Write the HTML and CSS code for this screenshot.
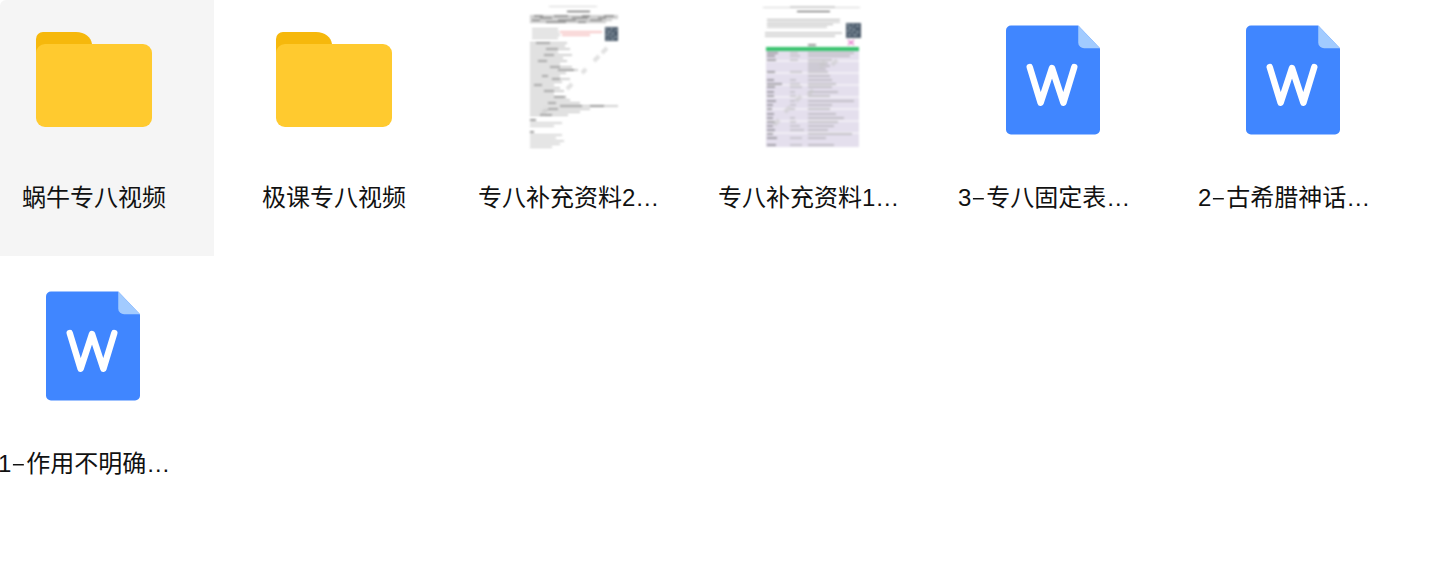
FILE: index.html
```html
<!DOCTYPE html>
<html lang="zh-CN">
<head>
  <meta charset="UTF-8" />
  <title>专八资料</title>
  <link rel="stylesheet" href="styles.css">
</head>
<body>

<div class="page">
  <div class="file-list">

    <div class="file-item active">
      <div class="file-icon">
        <svg class="folder" viewBox="0 0 116 95">
          <path class="folder-tab" d="M0 30V7a7 7 0 0 1 7-7h33c9 0 15 5 16 12v18z"/>
          <rect class="folder-front" y="12" width="116" height="83" rx="9"/>
        </svg>
      </div>
      <div class="file-name">蜗牛专八视频</div>
    </div>

    <div class="file-item">
      <div class="file-icon">
        <svg class="folder" viewBox="0 0 116 95">
          <path class="folder-tab" d="M0 30V7a7 7 0 0 1 7-7h33c9 0 15 5 16 12v18z"/>
          <rect class="folder-front" y="12" width="116" height="83" rx="9"/>
        </svg>
      </div>
      <div class="file-name">极课专八视频</div>
    </div>

    <div class="file-item">
      <div class="file-icon">
        <svg class="thumb" viewBox="0 0 108 150">
          <path class="ln-light" d="M29 1.5h48"/>
          <path class="ln-dark" d="M47 6.5h23"/>
          <path class="ln-mid" d="M10 11h88M10 13h88M10 15.2h82M10 17.2h76"/>
          <path class="ln-dark-thin" d="M14 11h9M34 11h14M62 11h8M84 11h10M20 13h12M52 13h16M78 13h8M12 15.2h8M38 15.2h18M70 15.2h12M26 17.2h20M58 17.2h8"/>
          <path class="ln-soft" d="M12 24h26M12 27h27M12 30h28M12 33h26"/>
          <path class="ln-red" d="M40 27h42M42 30h28"/>
          <rect class="qr" x="85" y="22" width="13" height="14"/>
          <path class="qr-dots" d="M86 24h2M90 24h3M95 25h2M87 27h4M93 27v3M86 30h3M90 31h2M94 32h3M87 34h2M91 34h3"/>
          <path class="ln-mid" d="M10 38h37M10 41h35M10 44h40M10 47h28M10 50h42M10 53h33M10 56h37M10 59h30M10 62h42M10 65h48M10 68h36M10 71h30M10 74h40M10 77h32M10 80h24M10 83h30M10 86h34M10 89h24M10 92h34M10 95h40M10 98h50M10 101h88M10 104h60M10 107h50M10 110h38"/>
          <path class="ln-dark-thin" d="M16 38h14M26 44h12M24 50h10M18 56h9M30 62h10M38 65h16M22 71h6M32 74h8M14 80h8M24 86h10M34 92h12M28 98h8M40 101h22M70 101h14M28 104h10M20 110h12"/>
          <path class="ln-dark" d="M10 115h6"/>
          <path class="ln-soft" d="M10 118h32M10 121h24"/>
          <path class="ln-dark" d="M10 127h4"/>
          <path class="ln-soft" d="M10 130h32M10 133h26M10 136h34M10 139h30M10 142h22"/>
          <path class="stamp" d="M22 109l5-5M47 84l5-5M62 68l4-4M74 56l5-5M82 48l5-5"/>
        </svg>
      </div>
      <div class="file-name cut">专八补充资料2…</div>
    </div>

    <div class="file-item">
      <div class="file-icon">
        <svg class="thumb" viewBox="0 0 108 150">
          <path class="ln-light" d="M3 2.5h97"/>
          <path class="ln-soft" d="M30 2h45"/>
          <path class="ln-dark" d="M37 6.5h33"/>
          <path class="ln-soft" d="M7 14.5h73M7 17h73M7 19.5h66M7 22h60"/>
          <path class="ln-mid" d="M5 28h77M5 31h70"/>
          <rect class="qr" x="86" y="18" width="15" height="15"/>
          <path class="qr-dots" d="M87 20h3M92 20h2M96 21h3M88 23h4M94 23v3M87 26h3M91 27h2M96 27h3M88 30h3M93 30h4"/>
          <path class="ln-pink" d="M88 35l6 5M94 35l-6 5"/>
          <path class="ln-dark" d="M48 40h8"/>
          <rect class="table-body" x="6" y="46" width="93" height="96"/>
          <path class="table-band" d="M6 56h93M6 68h93M6 80h93M6 92h93M6 104h93M6 116h93M6 128h93"/>
          <rect class="table-head" x="6" y="42" width="93" height="4"/>
          <path class="ln-dark-thin" d="M7 48h11M7 51h8M7 55h9M7 67h8M7 75h7M7 79h15M7 82h8M7 87h7M7 91h7M7 96h9M7 100h6M7 104h5M7 109h7M7 113h6M7 117h8M7 121h6M7 125h8M7 129h6M7 133h10M7 140h9"/>
          <path class="ln-soft" d="M30 48h8M30 51h10M30 55h8M30 67h12M30 75h6M30 79h10M30 82h12M30 87h5M30 91h6M30 96h5M30 100h6M30 104h5M30 113h5M30 117h6M30 121h10M30 125h14M30 133h12M30 140h12"/>
          <path class="ln-mid" d="M48 48h46M48 51h42M48 55h24M48 58h20M48 61h22M48 64h18M48 67h20M48 71h22M48 75h24M48 79h28M48 82h24M48 87h30M48 91h22M48 96h46M48 100h24M48 104h22M48 109h28M48 113h36M48 117h30M48 121h26M48 125h20M48 129h44M48 133h18M48 140h26"/>
          <path class="stamp" d="M14 120l5-5M25 107l5-5M36 96l5-5M48 90l5-5M60 62l5-5M72 60l5-5"/>
        </svg>
      </div>
      <div class="file-name cut">专八补充资料1…</div>
    </div>

    <div class="file-item">
      <div class="file-icon">
        <svg class="word" viewBox="0 0 95 110">
          <path class="word-page" d="M5 0h68l22 23v82a5 5 0 0 1-5 5H5a5 5 0 0 1-5-5V5a5 5 0 0 1 5-5z"/>
          <path class="word-fold" d="M73 0l22 23H79a6 6 0 0 1-6-6z"/>
          <path class="word-w" d="M24 42l11 36 11.5-35 11.5 35 11-36"/>
        </svg>
      </div>
      <div class="file-name cut">3<span class="dash">-</span>专八固定表…</div>
    </div>

    <div class="file-item">
      <div class="file-icon">
        <svg class="word" viewBox="0 0 95 110">
          <path class="word-page" d="M5 0h68l22 23v82a5 5 0 0 1-5 5H5a5 5 0 0 1-5-5V5a5 5 0 0 1 5-5z"/>
          <path class="word-fold" d="M73 0l22 23H79a6 6 0 0 1-6-6z"/>
          <path class="word-w" d="M24 42l11 36 11.5-35 11.5 35 11-36"/>
        </svg>
      </div>
      <div class="file-name cut">2<span class="dash">-</span>古希腊神话…</div>
    </div>

    <div class="file-item">
      <div class="file-icon">
        <svg class="word" viewBox="0 0 95 110">
          <path class="word-page" d="M5 0h68l22 23v82a5 5 0 0 1-5 5H5a5 5 0 0 1-5-5V5a5 5 0 0 1 5-5z"/>
          <path class="word-fold" d="M73 0l22 23H79a6 6 0 0 1-6-6z"/>
          <path class="word-w" d="M24 42l11 36 11.5-35 11.5 35 11-36"/>
        </svg>
      </div>
      <div class="file-name cut">1<span class="dash">-</span>作用不明确…</div>
    </div>

  </div>
</div>

</body>
</html>
```

FILE: styles.css
```css
body {
  margin: 0;
  background: #fff;
  font-family: "Liberation Sans", "Noto Sans CJK SC", sans-serif;
  color: #111;
}

.page {
  height: 588px;
  overflow: hidden;
  border-top-left-radius: 6px;
}

.file-list {
  display: grid;
  grid-template-columns: repeat(6, 240px);
  grid-auto-rows: 256px;
  row-gap: 10px;
  margin-left: -26px;
}

.file-item {
  display: flex;
  flex-direction: column;
  align-items: center;
  padding-top: 5px;
}

.file-item.active {
  background: #f5f5f5;
}

.file-icon {
  width: 150px;
  height: 150px;
  display: flex;
  align-items: center;
  justify-content: center;
}

.file-name {
  width: 192px;
  margin-top: 26px;
  font-size: 24px;
  line-height: 34px;
  text-align: center;
  white-space: nowrap;
}

.file-name.cut {
  text-align: left;
}

.dash {
  display: inline-block;
  width: 15px;
  text-align: center;
  font-family: Inter, sans-serif;
  font-weight: 300;
  transform: scaleX(1.5);
}

/* folder */
.folder {
  width: 116px;
  height: 95px;
  margin-bottom: 1px;
}

.folder-tab {
  fill: #f6b80c;
}

.folder-front {
  fill: #ffca2f;
}

/* word file */
.word {
  width: 94px;
  height: 110px;
  margin-right: 2px;
}

.word-page {
  fill: #4086ff;
}

.word-fold {
  fill: #a2cbff;
}

.word-w {
  fill: none;
  stroke: #fff;
  stroke-width: 6.5;
  stroke-linecap: round;
  stroke-linejoin: round;
}

/* pdf thumbnails */
.thumb {
  width: 108px;
  height: 150px;
  filter: blur(0.85px);
}

.thumb path {
  fill: none;
}

.ln-light {
  stroke: #ccc;
  stroke-width: 0.8;
}

.ln-soft {
  stroke: #a8a8a8;
  stroke-width: 0.9;
}

.ln-mid {
  stroke: #999;
  stroke-width: 0.9;
}

.ln-dark {
  stroke: #444;
  stroke-width: 1.1;
}

.ln-dark-thin {
  stroke: #555;
  stroke-width: 0.9;
}

.ln-red {
  stroke: #ee8f8f;
  stroke-width: 1;
}

.ln-pink {
  stroke: #e070c4;
  stroke-width: 1.2;
}

.qr {
  fill: #4d5c6c;
}

.qr-dots {
  stroke: #b3c0ca;
  stroke-width: 1;
}

.stamp {
  stroke: #c6c6c6;
  stroke-width: 4;
  stroke-opacity: 0.55;
}

.table-body {
  fill: #e4dfed;
}

.table-band {
  stroke: #f5f3f8;
  stroke-width: 1.5;
}

.table-head {
  fill: #35c26b;
}
```
